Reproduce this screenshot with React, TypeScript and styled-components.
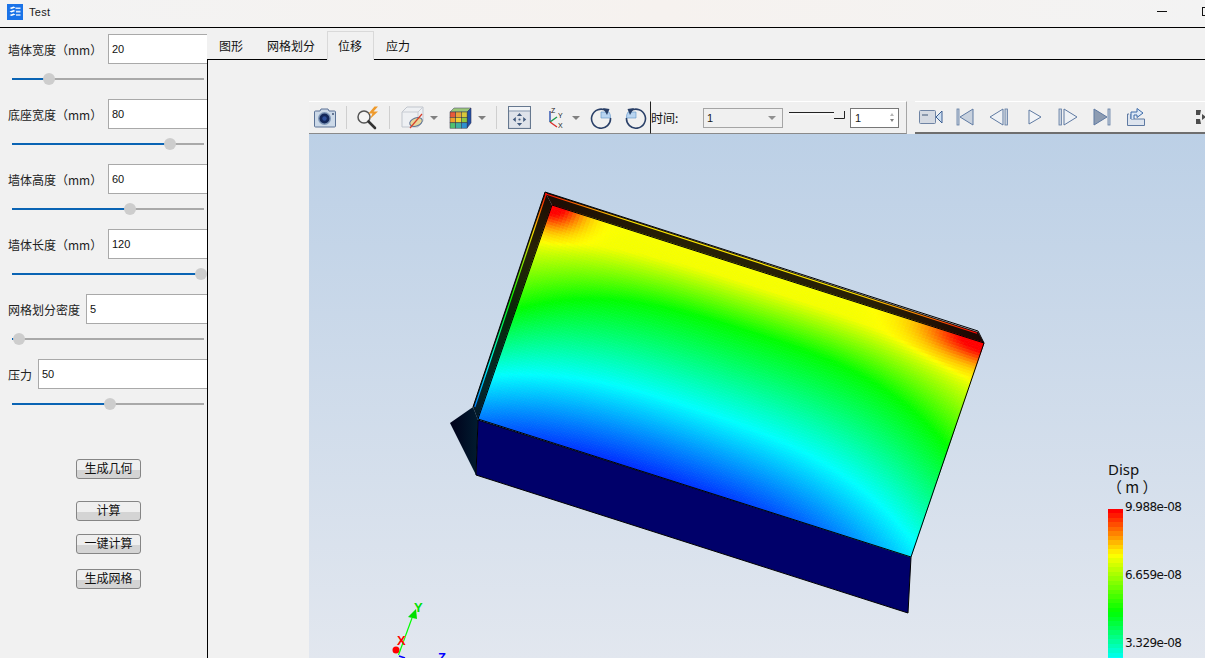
import React, { useMemo } from "react";
import styled, { createGlobalStyle } from "styled-components";

const cjk = `"Noto Sans CJK SC", "Liberation Sans", sans-serif`;

const GlobalStyle = createGlobalStyle`
  html, body {
    margin: 0;
    padding: 0;
    overflow: hidden;
    background: #f1f1f1;
    font-family: ${cjk};
  }
`;

const Window = styled.div`
  width: 1205px;
  height: 658px;
  display: flex;
  flex-direction: column;
  overflow: hidden;
  background: #f1f1f1;
  color: #1a1a1a;
`;

const TitleBar = styled.div`
  height: 28px;
  box-sizing: border-box;
  flex: none;
  display: flex;
  align-items: center;
  padding: 0 0 4px 7px;
  background: linear-gradient(90deg, #f3f3f3, #f6f2ef 55%, #f3f3f3);
  border-bottom: 1px solid #000;
`;

const TitleText = styled.span`
  margin-left: 6px;
  font: 11px "Liberation Sans", sans-serif;
  letter-spacing: 0.3px;
  flex: 1;
`;

const Minimize = styled.span`
  width: 10px;
  height: 1px;
  background: #111;
  margin-right: 35px;
`;

const Maximize = styled.span`
  width: 10px;
  height: 7px;
  flex: none;
  border: 1px solid #111;
  margin-right: -9px;
`;

const Body = styled.div`
  flex: 1;
  min-height: 0;
  display: flex;
`;

const LeftPanel = styled.aside`
  width: 207px;
  flex: none;
  overflow: hidden;
  padding-top: 6px;
  display: flex;
  flex-direction: column;
`;

const ParamBlock = styled.div`
  margin-bottom: 14px;
`;

const FieldRow = styled.div`
  display: flex;
  align-items: center;
  height: 30px;
  padding-left: 8px;
  margin-right: -3px;
`;

const FieldLabel = styled.label<{ $w: number }>`
  width: ${(p) => p.$w}px;
  flex: none;
  font-size: 12px;
  color: #222;
  white-space: nowrap;
`;

const FieldInput = styled.div`
  flex: 1;
  height: 30px;
  box-sizing: border-box;
  border: 1px solid #a9a9a9;
  background: #fff;
  padding-left: 3px;
  display: flex;
  align-items: center;
  font: 11px "Liberation Sans", sans-serif;
  color: #111;
`;

const SliderTrack = styled.div`
  position: relative;
  height: 2px;
  margin: 14px 3px 5px 12px;
  background: #a9a9a9;
`;

const SliderFill = styled.div`
  height: 100%;
  background: #0a64b4;
`;

const SliderThumb = styled.div`
  position: absolute;
  top: -5px;
  width: 12px;
  height: 12px;
  margin-left: -6px;
  border-radius: 50%;
  background: #cdcdcd;
`;

const ActionColumn = styled.div`
  display: flex;
  flex-direction: column;
  align-items: flex-start;
  padding: 35px 0 0 76px;
`;

const ActionButton = styled.button<{ $mb: number }>`
  width: 65px;
  height: 20px;
  margin: 0 0 ${(p) => p.$mb}px;
  padding: 0 0 2px;
  box-sizing: border-box;
  border: 1px solid #858585;
  border-radius: 3px;
  background: linear-gradient(#efefef 0 58%, #d4d4d4 58% 100%);
  font: 12px ${cjk};
  line-height: 16px;
  color: #111;
`;

const Main = styled.main`
  flex: 1;
  min-width: 0;
  display: flex;
  flex-direction: column;
`;

const TabBar = styled.div`
  flex: none;
  display: flex;
  align-items: flex-end;
  padding-top: 3px;
  height: 28px;
  border-bottom: 1px solid #000;
`;

const Tab = styled.div<{ $active?: boolean }>`
  height: ${(p) => (p.$active ? "29px" : "28px")};
  margin-bottom: ${(p) => (p.$active ? "-1px" : "0")};
  padding: ${(p) => (p.$active ? "0 11px 0 10px" : "0 12px")};
  box-sizing: border-box;
  display: flex;
  align-items: center;
  font-size: 12px;
  color: #111;
  background: #f1f1f1;
  border: ${(p) => (p.$active ? "1px solid #d9d9d9" : "none")};
  border-bottom: ${(p) => (p.$active ? "1px solid #f1f1f1" : "none")};
`;

const Content = styled.div`
  flex: 1;
  min-height: 0;
  display: flex;
  flex-direction: column;
  border-left: 1px solid #000;
  padding: 41px 0 0 101px;
`;

const Toolbar = styled.div`
  height: 33px;
  flex: none;
  display: flex;
  background: #f0f0f0;
`;

const ToolGroup = styled.div`
  display: flex;
  align-items: center;
  height: 33px;
  box-sizing: border-box;
  flex: none;
  border-top: 1px solid #fff;
  border-bottom: 1px solid #8a8a8a;
  padding-left: 5px;
  width: 341px;
`;

const TimeGroup = styled.div`
  display: flex;
  align-items: center;
  width: 257px;
  height: 33px;
  box-sizing: border-box;
  flex: none;
  border-left: 1px solid #222;
  border-right: 1px solid #a5a5a5;
  border-top: 1px solid #fff;
  border-bottom: 1px solid #8a8a8a;
  margin-right: 8px;
`;

const PlayGroup = styled.div`
  flex: 1;
  display: flex;
  align-items: center;
  height: 33px;
  box-sizing: border-box;
  border-top: 1px solid #fff;
  border-bottom: 2px solid #6e6e6e;
  padding-left: 4px;
  overflow: hidden;
`;

const Tool = styled.span<{ $w: number; $ml?: number }>`
  width: ${(p) => p.$w}px;
  margin-left: ${(p) => p.$ml ?? 0}px;
  flex: none;
  display: flex;
  justify-content: center;
  align-items: center;
`;

const ToolSep = styled.span<{ $ml: number }>`
  width: 1px;
  height: 23px;
  flex: none;
  background: #cfcfcf;
  margin-left: ${(p) => p.$ml}px;
`;

const DropArrow = styled.span<{ $ml: number }>`
  width: 0;
  height: 0;
  flex: none;
  margin-left: ${(p) => p.$ml}px;
  border-left: 4px solid transparent;
  border-right: 4px solid transparent;
  border-top: 4px solid #808080;
`;

const TimeLabel = styled.span`
  width: 52px;
  flex: none;
  font-size: 12px;
  color: #111;
`;

const Combo = styled.div`
  width: 80px;
  height: 20px;
  box-sizing: border-box;
  flex: none;
  border: 1px solid #a5a5a5;
  padding: 0 6px 0 3px;
  display: flex;
  align-items: center;
  justify-content: space-between;
  font: 11px "Liberation Sans", sans-serif;
`;

const ComboArrow = styled.span`
  width: 0;
  height: 0;
  border-left: 4px solid transparent;
  border-right: 4px solid transparent;
  border-top: 4px solid #909090;
`;

const Spin = styled.div`
  width: 49px;
  height: 20px;
  box-sizing: border-box;
  flex: none;
  margin-left: 5px;
  border: 1px solid #777;
  background: #fff;
  padding: 0 4px;
  display: flex;
  align-items: center;
  justify-content: space-between;
  font: 11px "Liberation Sans", sans-serif;
`;

const SpinArrows = styled.span`
  display: flex;
  flex-direction: column;
  gap: 3px;
  i {
    width: 0;
    height: 0;
    border-left: 2px solid transparent;
    border-right: 2px solid transparent;
  }
  i:first-child {
    border-bottom: 3px solid #b5b5b5;
  }
  i:last-child {
    border-top: 3px solid #808080;
  }
`;

const Viewport = styled.div`
  position: relative;
  flex: 1;
  min-height: 0;
  overflow: hidden;
  background: linear-gradient(#bcd0e6, #e2e7ef);
  svg {
    display: block;
  }
`;

const Legend = styled.div`
  position: absolute;
  left: 799px;
  top: 327px;
  width: 100px;
  color: #111;
`;

const LegendTitle = styled.div`
  font: 15px/17px "Noto Sans", sans-serif;
`;

const LegendUnit = styled.div`
  font: 15px/17px ${cjk};
  margin: 0 0 14px -1px;
`;

const LegendBar = styled.div<{ $bg: string }>`
  width: 15px;
  height: 160px;
  background: ${(p) => p.$bg};
`;

const LegendTick = styled.span<{ $top: number }>`
  position: absolute;
  left: 17px;
  top: ${(p) => p.$top}px;
  font: 12px/14px "DejaVu Sans", sans-serif;
  letter-spacing: -0.55px;
  white-space: nowrap;
`;

const params = [
  { label: "墙体宽度（mm）", w: 100, value: "20", pos: 0.165 },
  { label: "底座宽度（mm）", w: 100, value: "80", pos: 0.83 },
  { label: "墙体高度（mm）", w: 100, value: "60", pos: 0.61 },
  { label: "墙体长度（mm）", w: 100, value: "120", pos: 1 },
  { label: "网格划分密度", w: 78, value: "5", pos: 0 },
  { label: "压力", w: 30, value: "50", pos: 0.5 },
];

const actions = [
  { text: "生成几何", mb: 22 },
  { text: "计算", mb: 13 },
  { text: "一键计算", mb: 15 },
  { text: "生成网格", mb: 0 },
];

const tabs = ["图形", "网格划分", "位移", "应力"];

// jet colour map, 0 is blue and 1 is red
function jet(v: number) {
  const t = Math.min(1, Math.max(0, v));
  const c = (x: number) => Math.round(255 * Math.min(1, Math.max(0, x)));
  const r = c(t < 0.5 ? 0 : t < 0.75 ? (t - 0.5) * 4 : 1);
  const g = c(t < 0.25 ? t * 4 : t < 0.75 ? 1 : (1 - t) * 4);
  const b = c(t < 0.25 ? 1 : t < 0.5 ? (0.5 - t) * 4 : 0);
  return `rgb(${r},${g},${b})`;
}

// value on the wall face, a runs along the top edge, b runs down the face
function field(a: number, b: number) {
  const d = Math.abs(2 * a - 1);
  const s = d * d * d;
  const skew = a * a * a * a * 0.14;
  const levels = [
    [-0.3, 0.76],
    [0.07 + 0.1 * s, 0.74],
    [0.27 + 0.22 * s, 0.5],
    [0.66 + 0.14 * s + skew, 0.25],
    [1.0 + 0.12 * s + skew * 2, 0.04],
    [1.6, 0],
  ];
  let base = 0;
  for (let i = 0; i < levels.length - 1; i++) {
    const [b0, v0] = levels[i];
    const [b1, v1] = levels[i + 1];
    if (b <= b1) {
      base = v0 + ((b - b0) / (b1 - b0)) * (v1 - v0);
      break;
    }
  }
  // the two top corners are hotter than the rest of the edge
  const left = Math.exp(-Math.pow(a / 0.07, 2) - Math.pow(b / 0.1, 2));
  const right = Math.exp(-Math.pow((1 - a) / 0.13, 2) - Math.pow(b / 0.1, 2));
  return base + 0.3 * left + 0.3 * right;
}

const TL = [552, 205];
const TR = [984, 343];
const BL = [478, 419];
const BR = [911, 557];

function facePoint(a: number, b: number) {
  const x = TL[0] * (1 - a) * (1 - b) + TR[0] * a * (1 - b) + BL[0] * (1 - a) * b + BR[0] * a * b;
  const y = TL[1] * (1 - a) * (1 - b) + TR[1] * a * (1 - b) + BL[1] * (1 - a) * b + BR[1] * a * b;
  return `${x.toFixed(1)},${y.toFixed(1)}`;
}

const WallFace = () => {
  const cells = useMemo(() => {
    const cols = 120;
    const rows = 80;
    const out: { pts: string; fill: string }[] = [];
    for (let j = 0; j < rows; j++) {
      for (let i = 0; i < cols; i++) {
        const a0 = i / cols;
        const a1 = (i + 1) / cols;
        const b0 = j / rows;
        const b1 = (j + 1) / rows;
        out.push({
          pts: [facePoint(a0, b0), facePoint(a1, b0), facePoint(a1, b1), facePoint(a0, b1)].join(" "),
          fill: jet(field((a0 + a1) / 2, (b0 + b1) / 2)),
        });
      }
    }
    return out;
  }, []);
  return (
    <g>
      {cells.map((c, i) => (
        <polygon key={i} points={c.pts} fill={c.fill} stroke={c.fill} strokeWidth={0.7} />
      ))}
    </g>
  );
};

const Scene = () => (
  <svg width={896} height={524} viewBox="309 134 896 524">
    <defs>
      <linearGradient id="topRim" gradientUnits="userSpaceOnUse" x1="545" y1="192" x2="984" y2="343">
        <stop offset="0" stopColor="#1c0b04" />
        <stop offset="0.3" stopColor="#272006" />
        <stop offset="0.75" stopColor="#282006" />
        <stop offset="1" stopColor="#1c0503" />
      </linearGradient>
      <linearGradient id="leftRim" gradientUnits="userSpaceOnUse" x1="545" y1="192" x2="473" y2="420">
        <stop offset="0" stopColor="#1c0b04" />
        <stop offset="0.25" stopColor="#282206" />
        <stop offset="0.55" stopColor="#06280a" />
        <stop offset="0.85" stopColor="#04282c" />
        <stop offset="1" stopColor="#021628" />
      </linearGradient>
      <linearGradient id="topEdge" gradientUnits="userSpaceOnUse" x1="545" y1="192" x2="978" y2="332">
        <stop offset="0" stopColor="#ff0000" />
        <stop offset="0.1" stopColor="#ff9000" />
        <stop offset="0.2" stopColor="#ffe800" />
        <stop offset="0.7" stopColor="#ffe800" />
        <stop offset="0.85" stopColor="#ff9000" />
        <stop offset="1" stopColor="#ff0000" />
      </linearGradient>
      <linearGradient id="leftEdge" gradientUnits="userSpaceOnUse" x1="545" y1="192" x2="473" y2="407">
        <stop offset="0" stopColor="#ff0000" />
        <stop offset="0.18" stopColor="#ffe000" />
        <stop offset="0.5" stopColor="#00ff00" />
        <stop offset="0.8" stopColor="#00ffff" />
        <stop offset="1" stopColor="#0080ff" />
      </linearGradient>
      <linearGradient id="wedge" gradientUnits="userSpaceOnUse" x1="450" y1="423" x2="478" y2="423">
        <stop offset="0" stopColor="#00001a" />
        <stop offset="1" stopColor="#011c30" />
      </linearGradient>
    </defs>
    <polygon points="473,407 450,423 476,475 478,420" fill="url(#wedge)" />
    <polygon points="478,420 911,557 908,613 476,475" fill="#00006a" stroke="#000" strokeWidth={1} />
    <polygon points="545,192 978,332 984,343 552,205" fill="url(#topRim)" />
    <polygon points="545,192 552,205 478,420 473,407" fill="url(#leftRim)" />
    <WallFace />
    <polygon points="552,205 984,343 911,557 478,419" fill="none" stroke="#000" strokeWidth={1} />
    <polyline points="473,407 545,192 978,331 984,343" fill="none" stroke="#000" strokeWidth={1} />
    <line x1="545" y1="193.8" x2="977" y2="333.2" stroke="url(#topEdge)" strokeWidth={1.2} />
    <line x1="546.4" y1="193" x2="474.8" y2="407" stroke="url(#leftEdge)" strokeWidth={1.2} />
    {/* orientation marker */}
    <circle cx="396" cy="650" r="3.5" fill="#ff0000" />
    <line x1="398.5" y1="655" x2="412" y2="618" stroke="#00ff00" strokeWidth={1.2} />
    <polygon points="416,609 417,619 408,617" fill="#00e000" />
    <line x1="399" y1="656" x2="405" y2="658" stroke="#0000ff" strokeWidth={1.5} />
    <text x="414" y="612" fontFamily="Liberation Sans" fontWeight="700" fontSize="13" fill="#00e000">Y</text>
    <text x="397" y="645" fontFamily="Liberation Sans" fontWeight="700" fontSize="13" fill="#ff0000">X</text>
    <text x="438" y="662" fontFamily="Liberation Sans" fontWeight="700" fontSize="13" fill="#0000ff">Z</text>
  </svg>
);

const legendGradient = (() => {
  const stops: string[] = [];
  const total = 160;
  for (let y = 0; y < total; y += 4.5) {
    const v = 1 - (y < 44 ? (y / 44) * 0.25 : y < 101 ? 0.25 + ((y - 44) / 57) * 0.25 : 0.5 + ((y - 101) / 48) * 0.25);
    stops.push(`${jet(v)} ${y}px ${y + 4.5}px`);
  }
  return `linear-gradient(${stops.join(",")})`;
})();

const ChartLegend = () => (
  <Legend>
    <LegendTitle>Disp</LegendTitle>
    <LegendUnit>（ m ）</LegendUnit>
    <LegendBar $bg={legendGradient} />
    <LegendTick $top={39}>9.988e-08</LegendTick>
    <LegendTick $top={107}>6.659e-08</LegendTick>
    <LegendTick $top={175}>3.329e-08</LegendTick>
  </Legend>
);

const AppIcon = () => (
  <svg width={16} height={16} viewBox="0 0 16 16">
    <rect width="16" height="16" fill="#1a73e8" />
    <path d="M2.5 4l4-1.5 2 1-4 1.5zM2.5 7.5l4-1.5 2 1-4 1.5zM2.5 11l4-1.5 2 1-4 1.5z" fill="#fff" />
    <path d="M8.5 3.5h5v1.6h-5zM9 6.8h4.5v1.6H9zM9 10.2h4.5v1.6H9z" fill="#d6e6fc" />
  </svg>
);

const CameraIcon = () => (
  <svg width={24} height={20} viewBox="0 0 24 20">
    <path d="M7 3l1-2h7l1 2h5.5a1 1 0 0 1 1 1v14a1 1 0 0 1-1 1h-19a1 1 0 0 1-1-1V4a1 1 0 0 1 1-1z" fill="#ccd9e8" stroke="#5c7396" />
    <circle cx="11.5" cy="10.5" r="6.5" fill="#7f97b8" />
    <circle cx="11.5" cy="10.5" r="5" fill="#14285a" />
    <circle cx="11.5" cy="10.5" r="2.2" fill="#2e4f9a" />
    <circle cx="20" cy="6" r="0.9" fill="#33476b" />
  </svg>
);

const SearchIcon = () => (
  <svg width={24} height={24} viewBox="0 0 24 24">
    <circle cx="8" cy="11" r="6" fill="#f4f4f4" stroke="#555" strokeWidth="1.5" />
    <line x1="12.5" y1="15.5" x2="19" y2="22" stroke="#333" strokeWidth="2.6" strokeLinecap="round" />
    <path d="M18.5 0.5L12.5 7.5h4L14 13l8-7.5h-4.5L22 0.5z" fill="#ee9a2c" />
  </svg>
);

const BoxIcon = () => (
  <svg width={23} height={23} viewBox="0 0 23 23">
    <path d="M1 6l5-5h16v14l-5 6H1z" fill="#eef0f3" stroke="#c0c5cd" />
    <path d="M1 6h16v15M17 6l5-5" fill="none" stroke="#c8ccd3" />
    <ellipse cx="15" cy="16" rx="6.5" ry="4" fill="#e8d69a" stroke="#5c7396" transform="rotate(-20 15 16)" />
    <line x1="9" y1="22" x2="21" y2="8" stroke="#d8402c" strokeWidth="1.2" />
  </svg>
);

const ColorCubeIcon = () => {
  const colors = ["#e85a3a", "#e8a53a", "#d8c83a", "#f0a02a", "#f0d030", "#90c840", "#50c070", "#40b0a0", "#3090d0"];
  return (
    <svg width={23} height={22} viewBox="0 0 23 22">
      <path d="M1 5l4-4h17l-4 4z" fill="#9cc878" stroke="#557" strokeWidth="0.6" />
      <path d="M18 5l4-4v15l-4 5z" fill="#2050a8" stroke="#335" strokeWidth="0.6" />
      {colors.map((c, i) => (
        <rect key={i} x={1 + (i % 3) * 5.7} y={5 + Math.floor(i / 3) * 5.4} width={5.7} height={5.4} fill={c} stroke="#334" strokeWidth="0.5" />
      ))}
    </svg>
  );
};

const FitIcon = () => (
  <svg width={23} height={23} viewBox="0 0 23 23">
    <rect x="0.5" y="0.5" width="22" height="22" fill="#dfe3ea" stroke="#66788f" strokeWidth="1.2" />
    <rect x="1" y="1" width="21" height="3.5" fill="#f2f4f7" />
    <line x1="1" y1="5" x2="22" y2="5" stroke="#8a9ab0" />
    <path d="M11.5 7l2.6 3h-5.2zM11.5 20l2.6-3h-5.2zM4.8 13.5l3-2.6v5.2zM18.2 13.5l-3-2.6v5.2z" fill="#41597c" />
    <circle cx="11.5" cy="13.5" r="1.1" fill="#41597c" />
  </svg>
);

const AxesIcon = () => (
  <svg width={21} height={23} viewBox="0 0 21 23">
    <line x1="5" y1="16" x2="5" y2="5" stroke="#2a4fb0" strokeWidth="1.4" />
    <line x1="5" y1="16" x2="12" y2="11" stroke="#1a9a4a" strokeWidth="1.4" />
    <line x1="5" y1="16" x2="12" y2="21" stroke="#d8302c" strokeWidth="1.4" />
    <text x="6" y="7" fontSize="7" fontFamily="Liberation Sans" fill="#222">Z</text>
    <text x="13" y="12" fontSize="7" fontFamily="Liberation Sans" fill="#222">Y</text>
    <text x="13" y="22" fontSize="7" fontFamily="Liberation Sans" fill="#222">X</text>
  </svg>
);

const RotateIcon = ({ flip }: { flip?: boolean }) => (
  <svg width={22} height={22} viewBox="0 0 22 22" style={flip ? { transform: "scaleX(-1)" } : undefined}>
    <path d="M11 11V5h8a9 9 0 0 1 1.5 6z" fill="#b8d4f0" stroke="#5c90c8" strokeWidth="0.6" />
    <path d="M16 3.6A9.5 9.5 0 1 0 20.5 11" fill="none" stroke="#2a4068" strokeWidth="1.6" />
    <path d="M13 1l6.5 1-2.5 6z" fill="#2a4068" />
  </svg>
);

const MiniSlider = () => (
  <svg width={56} height={14} viewBox="0 0 56 14" style={{ flex: "none", marginLeft: 6 }}>
    <line x1="0" y1="1.5" x2="45" y2="1.5" stroke="#222" />
    <line x1="0" y1="3" x2="45" y2="3" stroke="#fff" />
    <path d="M45 7.5H55.5V0" fill="none" stroke="#222" />
  </svg>
);

const media = { fill: "#c9d2de", stroke: "#5f7aa2" };

const VideoIcon = () => (
  <svg width={24} height={16} viewBox="0 0 24 16">
    <rect x="0.5" y="1.5" width="16" height="13" rx="1" fill="#d5dae2" stroke="#6f84a4" />
    <rect x="3" y="5" width="6" height="2" fill="#8a98ac" />
    <path d="M17 8l6-6v12z" fill="#cfe0f2" stroke="#3c5f92" />
  </svg>
);

const FirstIcon = () => (
  <svg width={18} height={18} viewBox="0 0 18 18">
    <rect x="1" y="1" width="2" height="16" {...media} strokeWidth="0.8" />
    <path d="M17 1v16L4 9z" {...media} />
  </svg>
);

const PrevIcon = () => (
  <svg width={20} height={18} viewBox="0 0 20 18">
    <path d="M14 1v16L1 9z" fill="#eef1f5" stroke={media.stroke} />
    <rect x="16" y="1" width="2.5" height="16" {...media} strokeWidth="0.8" />
  </svg>
);

const PlayIcon = () => (
  <svg width={16} height={18} viewBox="0 0 16 18">
    <path d="M2 2v14l12-7z" fill="#f2f4f7" stroke={media.stroke} />
  </svg>
);

const NextIcon = () => (
  <svg width={20} height={18} viewBox="0 0 20 18">
    <rect x="1" y="1" width="2.5" height="16" {...media} strokeWidth="0.8" />
    <path d="M6 1v16l13-8z" fill="#eef1f5" stroke={media.stroke} />
  </svg>
);

const LastIcon = () => (
  <svg width={18} height={18} viewBox="0 0 18 18">
    <path d="M1 1v16l13-8z" fill="#8d9cb2" stroke={media.stroke} />
    <rect x="15" y="1" width="2" height="16" {...media} strokeWidth="0.8" />
  </svg>
);

const ExportIcon = () => (
  <svg width={20} height={20} viewBox="0 0 20 20">
    <path d="M3 7H1.5v11.5h17V12H5V7" fill="#dde4ee" stroke="#5f7aa2" />
    <path d="M5 12V5h6V1.5L17 6l-6 4.5V8H8v4" fill="#dce8f6" stroke="#3c6aa8" />
  </svg>
);

const ExpandIcon = () => (
  <svg width={10} height={16} viewBox="0 0 10 16">
    <path d="M0 1h5l-1 5H0zM0 15h5l-1-5H0zM10 8l-4-3v6z" fill="#4c4c4c" />
  </svg>
);

export default function App() {
  return (
    <>
      <GlobalStyle />
      <Window>
        <TitleBar>
          <AppIcon />
          <TitleText>Test</TitleText>
          <Minimize />
          <Maximize />
        </TitleBar>
        <Body>
          <LeftPanel>
            {params.map((p) => (
              <ParamBlock key={p.label}>
                <FieldRow>
                  <FieldLabel $w={p.w}>{p.label}</FieldLabel>
                  <FieldInput>{p.value}</FieldInput>
                </FieldRow>
                <SliderTrack>
                  <SliderFill style={{ width: `${7 + p.pos * 182}px` }} />
                  <SliderThumb style={{ left: `${7 + p.pos * 182}px` }} />
                </SliderTrack>
              </ParamBlock>
            ))}
            <ActionColumn>
              {actions.map((a) => (
                <ActionButton key={a.text} $mb={a.mb}>
                  {a.text}
                </ActionButton>
              ))}
            </ActionColumn>
          </LeftPanel>
          <Main>
            <TabBar>
              {tabs.map((t) => (
                <Tab key={t} $active={t === "位移"}>
                  {t}
                </Tab>
              ))}
            </TabBar>
            <Content>
              <Toolbar>
                <ToolGroup>
                  <Tool $w={24} $ml={-1}>
                    <CameraIcon />
                  </Tool>
                  <ToolSep $ml={9} />
                  <Tool $w={24} $ml={9}>
                    <SearchIcon />
                  </Tool>
                  <ToolSep $ml={9} />
                  <Tool $w={23} $ml={11}>
                    <BoxIcon />
                  </Tool>
                  <DropArrow $ml={6} />
                  <Tool $w={23} $ml={11}>
                    <ColorCubeIcon />
                  </Tool>
                  <DropArrow $ml={6} />
                  <ToolSep $ml={10} />
                  <Tool $w={23} $ml={11}>
                    <FitIcon />
                  </Tool>
                  <Tool $w={21} $ml={14}>
                    <AxesIcon />
                  </Tool>
                  <DropArrow $ml={6} />
                  <Tool $w={22} $ml={10}>
                    <RotateIcon />
                  </Tool>
                  <Tool $w={22} $ml={13}>
                    <RotateIcon flip />
                  </Tool>
                </ToolGroup>
                <TimeGroup>
                  <TimeLabel>时间:</TimeLabel>
                  <Combo>
                    1
                    <ComboArrow />
                  </Combo>
                  <MiniSlider />
                  <Spin>
                    1
                    <SpinArrows>
                      <i />
                      <i />
                    </SpinArrows>
                  </Spin>
                </TimeGroup>
                <PlayGroup>
                  <Tool $w={24}>
                    <VideoIcon />
                  </Tool>
                  <Tool $w={18} $ml={13}>
                    <FirstIcon />
                  </Tool>
                  <Tool $w={20} $ml={15}>
                    <PrevIcon />
                  </Tool>
                  <Tool $w={16} $ml={18}>
                    <PlayIcon />
                  </Tool>
                  <Tool $w={20} $ml={15}>
                    <NextIcon />
                  </Tool>
                  <Tool $w={18} $ml={15}>
                    <LastIcon />
                  </Tool>
                  <Tool $w={20} $ml={15}>
                    <ExportIcon />
                  </Tool>
                  <Tool $w={10} $ml={50}>
                    <ExpandIcon />
                  </Tool>
                </PlayGroup>
              </Toolbar>
              <Viewport>
                <Scene />
                <ChartLegend />
              </Viewport>
            </Content>
          </Main>
        </Body>
      </Window>
    </>
  );
}
